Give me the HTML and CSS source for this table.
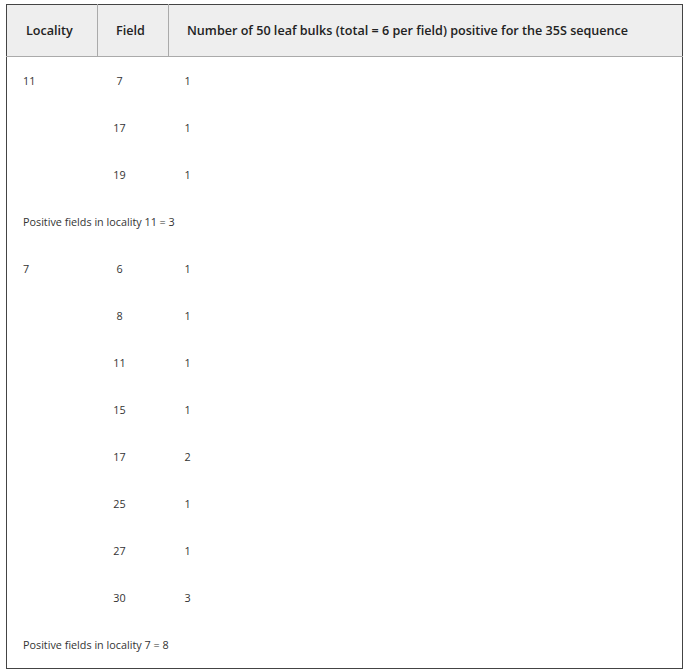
FILE: index.html
```html
<!DOCTYPE html>
<html>
<head>
<meta charset="utf-8">
<link rel="stylesheet" href="styles.css">
</head>
<body>
<div class="wrap">
<table class="data">
  <colgroup>
    <col class="c1"><col class="c2"><col class="c3">
  </colgroup>
  <thead>
    <tr>
      <th class="h1">Locality</th>
      <th class="h2">Field</th>
      <th class="h3">Number of 50 leaf bulks (total = 6 per field) positive for the 35S sequence</th>
    </tr>
  </thead>
  <tbody>
    <tr><td class="loc">11</td><td class="fld">7</td><td class="num">1</td></tr>
    <tr><td class="loc"></td><td class="fld">17</td><td class="num">1</td></tr>
    <tr><td class="loc"></td><td class="fld">19</td><td class="num">1</td></tr>
    <tr><td class="sum" colspan="3">Positive fields in locality 11 = 3</td></tr>
    <tr><td class="loc">7</td><td class="fld">6</td><td class="num">1</td></tr>
    <tr><td class="loc"></td><td class="fld">8</td><td class="num">1</td></tr>
    <tr><td class="loc"></td><td class="fld">11</td><td class="num">1</td></tr>
    <tr><td class="loc"></td><td class="fld">15</td><td class="num">1</td></tr>
    <tr><td class="loc"></td><td class="fld">17</td><td class="num">2</td></tr>
    <tr><td class="loc"></td><td class="fld">25</td><td class="num">1</td></tr>
    <tr><td class="loc"></td><td class="fld">27</td><td class="num">1</td></tr>
    <tr><td class="loc"></td><td class="fld">30</td><td class="num">3</td></tr>
    <tr><td class="sum" colspan="3">Positive fields in locality 7 = 8</td></tr>
  </tbody>
</table>
</div>
</body>
</html>
```

FILE: styles.css
```css
html, body {
  margin: 0;
  padding: 0;
  background: #fff;
}
body {
  font-family: "Open Sans", "Liberation Sans", sans-serif;
  color: #333;
}
.wrap {
  padding: 4px 2px 0 6px;
}
.data {
  width: 677px;
  border-collapse: collapse;
  table-layout: fixed;
  border: 1px solid #444;
}
.c1 { width: 91px; }
.c2 { width: 71px; }
.data th {
  background: #eeeeee;
  height: 50px;
  padding: 0 0 1px 0;
  text-align: left;
  font-size: 12.6px;
  font-weight: 600;
  color: #222;
  border-bottom: 1px solid #aaa;
  border-right: 1px solid #aaa;
}
.data th.h3 { border-right: 1px solid #444; }
.data th.h1 { padding-left: 19px; }
.data th.h2 { padding-left: 18px; }
.data th.h3 { padding-left: 18px; }
.data td {
  height: 47px;
  padding: 0;
  font-size: 10.8px;
  color: #333;
  vertical-align: middle;
}
.data td.loc { padding-left: 16px; }
.data td.fld { text-align: center; padding-left: 15px; padding-right: 42px; }
.data td.num { padding-left: 16px; }
.data td.sum { padding-left: 16px; }
```
